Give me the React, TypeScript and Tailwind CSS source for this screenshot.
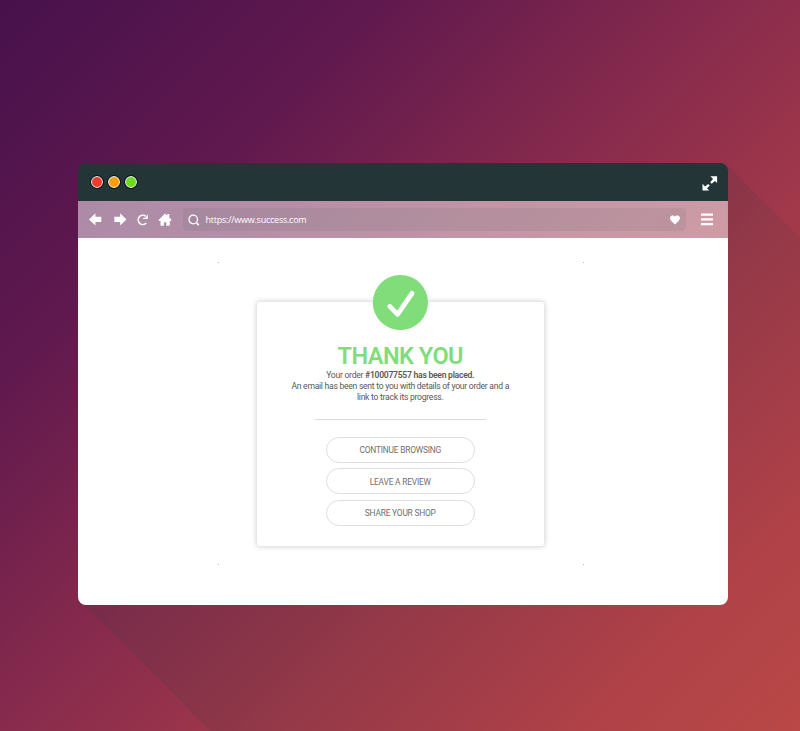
import React from "react";

const actions = ["CONTINUE BROWSING", "LEAVE A REVIEW", "SHARE YOUR SHOP"];

function TitleBar() {
  return (
    <header className="flex h-[38px] items-center justify-between bg-[#243538] pl-[13px] pr-[10.5px]">
      <div className="flex gap-[5px]">
        <span className="size-3 rounded-full border-[1.3px] border-white bg-[#f03b2c] outline outline-[0.7px] outline-[#0b1416]" />
        <span className="size-3 rounded-full border-[1.3px] border-white bg-[#fb9f09] outline outline-[0.7px] outline-[#0b1416]" />
        <span className="size-3 rounded-full border-[1.3px] border-white bg-[#6cda20] outline outline-[0.7px] outline-[#0b1416]" />
      </div>
      <svg className="mt-[2px] h-[15px] w-[16px]" viewBox="0 0 16 15" fill="#fff">
        <path d="M8.4.3h6.7v6.6l-2.1-2-3.3 2.9-1.5-1.5 2.8-3.2z" />
        <path d="M.5 7.8v6.6h6.7l-2.2-2.2 2.8-2.8-1.6-1.5-3.2 2.6z" />
      </svg>
    </header>
  );
}

function Toolbar() {
  return (
    <nav className="flex h-[37px] items-center bg-white/50 pl-[11px] pr-[14px]">
      <svg className="h-[13px] w-[13px]" viewBox="0 0 13 13" fill="#fff">
        <path d="M0 6.5 6.4.3v3.400h5.900v5.400H6.400v3.500z" />
      </svg>
      <svg className="ml-3 h-[13px] w-[13px]" viewBox="0 0 13 13" fill="#fff">
        <path d="M12.4 6.5 6.2.3v3.400H.3v5.400h5.900v3.500z" />
      </svg>
      <svg className="ml-[9px] h-[13px] w-[13px]" viewBox="0 0 13 13" fill="none">
        <path d="M9.8 3.4A4.6 4.6 0 1 0 10.2 10" stroke="#fff" strokeWidth="1.5" />
        <path d="M11.8 1v5H7.2v-1.300h2.500z" fill="#fff" />
      </svg>
      <svg className="ml-[9px] h-[13px] w-[14px]" viewBox="0 0 14 13" fill="#fff">
        <path d="M7 .4 9.3 2.7V1h2v3.600l2.400 2.400-.9 1h-1v4.700H8.300V9.200H5.900v3.500H2.500V8H1.400L.5 7z" />
      </svg>
      <div className="ml-[11px] flex h-[23px] w-[503px] items-center rounded-[4px] bg-[#6a7070]/15 pl-[5px] pr-[6px]">
        <svg className="h-3 w-3" viewBox="0 0 12 12" fill="none" stroke="#fff">
          <circle cx="5.2" cy="5.5" r="4.3" strokeWidth="1.2" />
          <path d="m8.8 9.1 2 2" strokeWidth="1.7" />
        </svg>
        <span className="ml-[5.5px] font-['Open_Sans',sans-serif] text-[9px] leading-none tracking-[-0.24px] text-white">
          https://www.success.com
        </span>
        <svg className="ml-auto h-[10px] w-[10px]" viewBox="0 0 10 10" fill="#fff">
          <path d="M5 9.6.9 5.4C-.9 2.9.4.5 2.5.5 3.7.5 4.6 1 5 1.7 5.4 1 6.3.5 7.5.5c2.1 0 3.4 2.4 1.6 4.9z" />
        </svg>
      </div>
      <svg className="ml-auto h-[13px] w-[13px]" viewBox="0 0 13 13" fill="#fff">
        <path d="M0 .5h12v2.200H0zM0 5.300h12v2.200H0zM0 10h12v2.200H0z" />
      </svg>
    </nav>
  );
}

function Dots() {
  return (
    <div className="ml-px flex w-[366px] justify-between">
      <span className="size-px bg-[#b8b8b8]" />
      <span className="size-px bg-[#b8b8b8]" />
    </div>
  );
}

function ConfirmationCard() {
  return (
    <section className="flex h-[243.5px] w-[286.5px] flex-col items-center rounded-[3px] bg-white text-center font-[Roboto,sans-serif] shadow-[0_0_5px_1px_rgba(0,0,0,0.17)]">
      <svg className="-mt-[28px] h-[56px] w-[56px] shrink-0" viewBox="0 0 56 56">
        <circle cx="28.4" cy="28.5" r="27.6" fill="#80dd7a" />
        <path d="m17.8 32.4 7.800 8L40 19.300" fill="none" stroke="#fff" strokeWidth="4.8" strokeLinecap="round" strokeLinejoin="round" />
      </svg>
      <h1 className="mt-[12.500px] text-[23.5px] font-semibold leading-[26px] tracking-[-0.5px] text-[#80dd7a]">THANK YOU</h1>
      <p className="mt-[1.5px] whitespace-nowrap text-[8.6px] leading-[11px] tracking-[-0.27px] text-[#585858]">
        Your order <span className="font-semibold">#100077557 has been placed.</span>
        <br />
        An email has been sent to you with details of your order and a
        <br />
        link to track its progress.
      </p>
      <hr className="mt-[15.5px] w-[171px] border-[#dadada]" />
      <div className="mt-[17px] flex flex-col gap-[5.5px]">
        {actions.map((label) => (
          <button
            key={label}
            className="flex h-[26px] w-[149px] items-center justify-center rounded-full border border-[#dfdfdf] pt-[2px] text-[8.4px] leading-none tracking-[-0.2px] text-[#707070]"
          >
            {label}
          </button>
        ))}
      </div>
    </section>
  );
}

export default function App() {
  return (
    <main className="relative flex h-[731px] w-[800px] overflow-hidden bg-[linear-gradient(135deg,#47114c_0%,#60194e_25%,#882b4d_48%,#a2394a_66%,#b94846_100%)] pl-[78px] pt-[163px]">
      {/* long diagonal shadow, cut away beneath the translucent toolbar */}
      <div className="absolute inset-0 bg-[linear-gradient(135deg,rgba(64,56,60,0.19)_40%,rgba(64,56,60,0.16)_62%,rgba(64,56,60,0)_85%)] [clip-path:polygon(80px_600px,727px_600px,727px_165px,800px_238px,800px_731px,210px_731px)]" />
      <div className="relative flex h-[441.5px] w-[650px] flex-col overflow-hidden rounded-[8px]">
        <TitleBar />
        <Toolbar />
        <div className="flex flex-1 flex-col items-center bg-white pt-6 pr-[5.5px]">
          <Dots />
          <div className="mt-[39px]">
            <ConfirmationCard />
          </div>
          <div className="mt-[18px]">
            <Dots />
          </div>
        </div>
      </div>
    </main>
  );
}
